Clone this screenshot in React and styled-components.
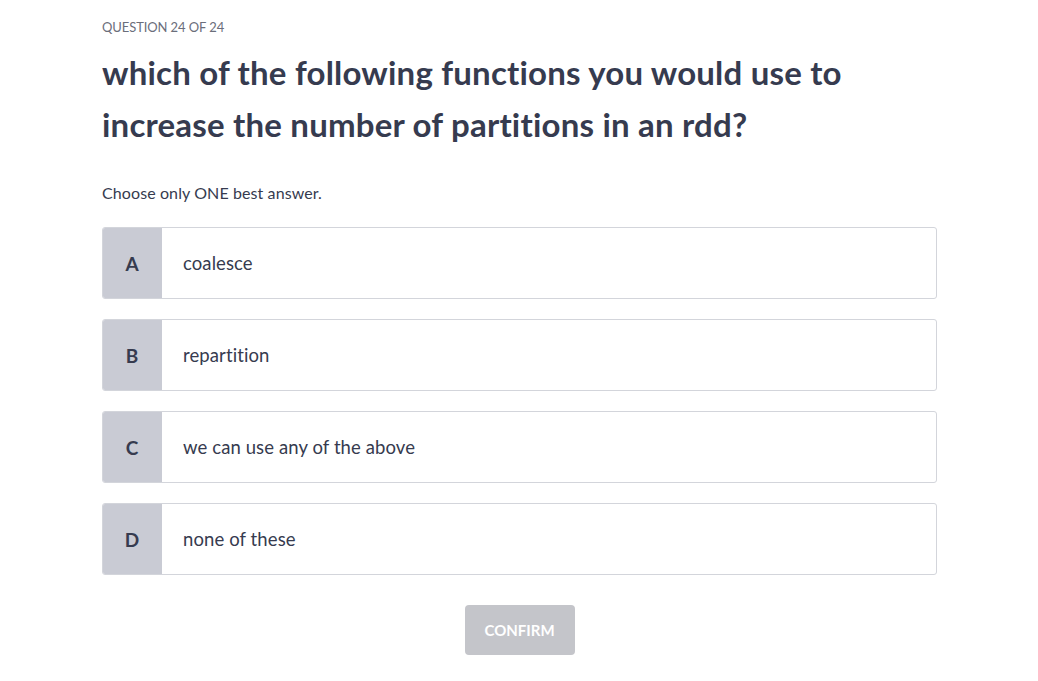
import React from 'react'
import styled, { createGlobalStyle } from 'styled-components'

const GlobalStyle = createGlobalStyle`
  body {
    margin: 0;
    background: #fff;
    font-family: Lato, "Open Sans", sans-serif;
  }
`

const Page = styled.div`
  width: 835px;
  padding: 18px 0 26px 102px;
`

const Counter = styled.div`
  font-size: 13px;
  line-height: 18px;
  color: #6b6e7b;
  letter-spacing: -0.1px;
`

const Title = styled.h1`
  margin: 10px 0 0;
  font-size: 33px;
  line-height: 52px;
  font-weight: 700;
  color: #363b4f;
  letter-spacing: 0.2px;
`

const Hint = styled.p`
  margin: 33px 0 0;
  font-size: 16px;
  line-height: 20px;
  color: #363b4f;
  letter-spacing: 0.1px;
`

const Options = styled.div`
  display: flex;
  flex-direction: column;
  gap: 20px;
  margin-top: 24px;
`

const Option = styled.div`
  display: flex;
  height: 72px;
  box-sizing: border-box;
  border: 1px solid #d3d5db;
  border-radius: 3px;
  overflow: hidden;
  cursor: pointer;
`

const Letter = styled.div`
  width: 60px;
  flex-shrink: 0;
  display: flex;
  align-items: center;
  justify-content: center;
  background: #c9cbd4;
  color: #363b4f;
  font-size: 19px;
  font-weight: 700;
  margin: -1px 0 -1px -1px;
`

const Label = styled.div`
  display: flex;
  align-items: center;
  padding-left: 21px;
  font-size: 18.5px;
  letter-spacing: 0.1px;
  color: #363b4f;
`

const Footer = styled.div`
  display: flex;
  justify-content: center;
  margin-top: 30px;
`

const Confirm = styled.button`
  width: 110px;
  height: 50px;
  border: none;
  border-radius: 4px;
  background: #c4c5ca;
  color: #fff;
  font-family: inherit;
  font-size: 15px;
  font-weight: 700;
  cursor: default;
`

const answers = [
  ['A', 'coalesce'],
  ['B', 'repartition'],
  ['C', 'we can use any of the above'],
  ['D', 'none of these'],
]

export default function App() {
  return (
    <>
      <GlobalStyle />
      <Page>
        <Counter>QUESTION 24 OF 24</Counter>
        <Title>
          which of the following functions you would use to
          <br />
          increase the number of partitions in an rdd?
        </Title>
        <Hint>Choose only ONE best answer.</Hint>
        <Options>
          {answers.map(([key, text]) => (
            <Option key={key}>
              <Letter>{key}</Letter>
              <Label>{text}</Label>
            </Option>
          ))}
        </Options>
        <Footer>
          <Confirm disabled>CONFIRM</Confirm>
        </Footer>
      </Page>
    </>
  )
}
